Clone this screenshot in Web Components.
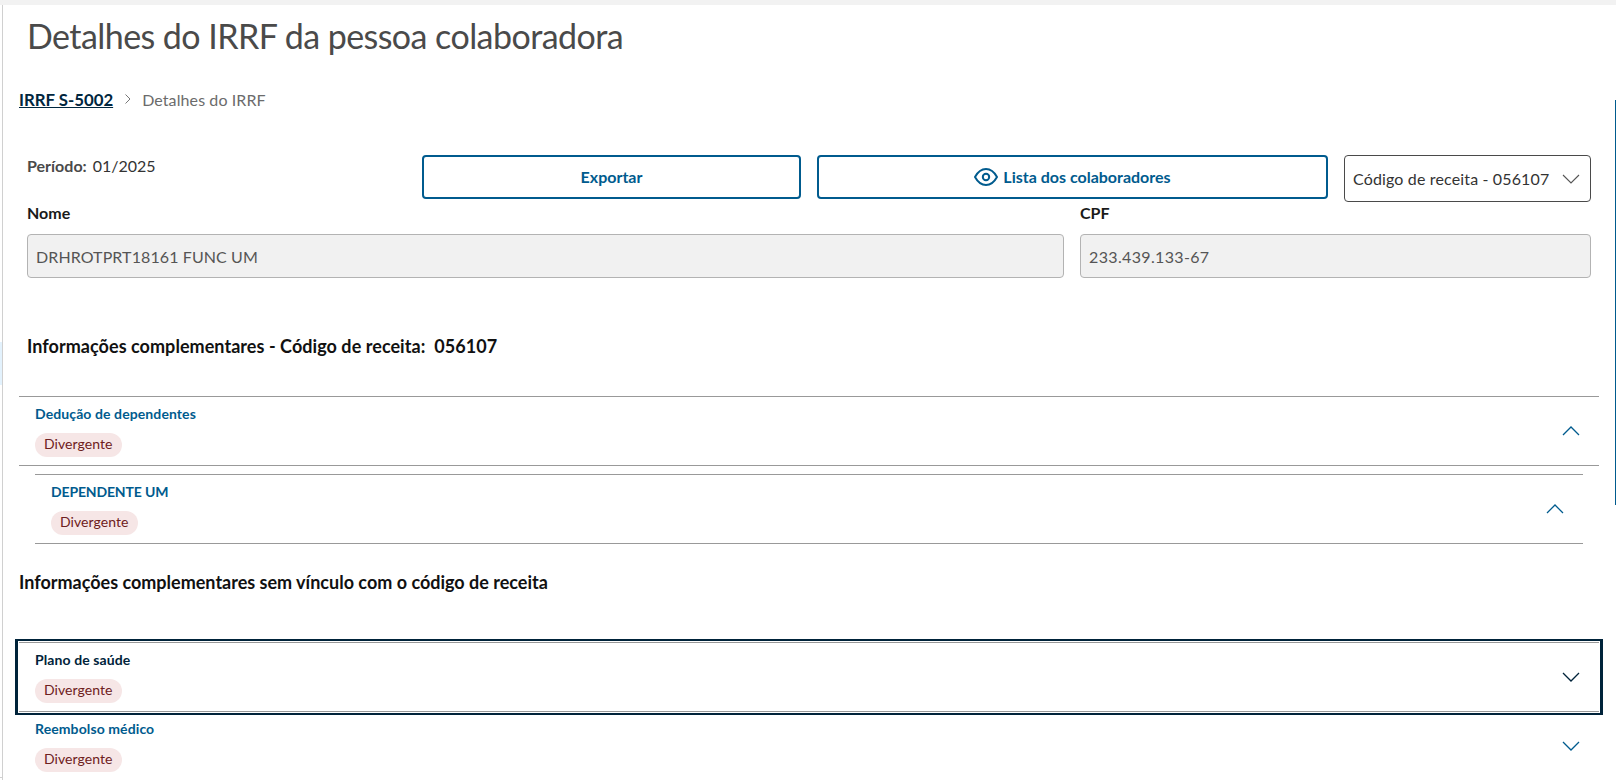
<!DOCTYPE html>
<html lang="pt-BR">
<head>
<meta charset="utf-8">
<title>Detalhes do IRRF</title>
<style>
  html, body { margin: 0; height: 100%; overflow: hidden; background: #fff; }
  body { font-family: Lato, "Open Sans", sans-serif; color: #1f1f1f; }
</style>
</head>
<body>
<irrf-page>
  <page-title slot="title">Detalhes do IRRF da pessoa colaboradora</page-title>
  <bread-crumb slot="crumb" link="IRRF S-5002" current="Detalhes do IRRF"></bread-crumb>

  <div slot="toolbar" style="display:contents">
    <period-info label="Período:" value="01/2025"></period-info>
    <action-button style="width:379px;margin-left:148px">Exportar</action-button>
    <action-button icon="eye" style="width:511px;margin-left:16px">Lista dos colaboradores</action-button>
    <code-select style="width:247px;margin-left:16px">Código de receita - 056107</code-select>
  </div>

  <read-field slot="fields" label="Nome" value="DRHROTPRT18161 FUNC UM" style="width:1037px;letter-spacing:0.1px"></read-field>
  <read-field slot="fields" label="CPF" value="233.439.133-67" style="width:511px;letter-spacing:0.35px"></read-field>

  <div slot="groups">
    <section-heading indent="27" top="56" bottom="38" style="letter-spacing:0.05px">Informações complementares - Código de receita:&nbsp; 056107</section-heading>
    <accordion-row open style="margin:0 17px 0 19px">Dedução de dependentes</accordion-row>
    <accordion-row open style="margin:8px 33px 0 35px;letter-spacing:-0.15px">DEPENDENTE UM</accordion-row>
    <section-heading indent="19" top="26" bottom="48">Informações complementares sem vínculo com o código de receita</section-heading>
    <accordion-row focused style="margin:0 17px 0 19px">Plano de saúde</accordion-row>
    <accordion-row style="margin:-1px 17px 0 19px;border-top-color:transparent">Reembolso médico</accordion-row>
  </div>
</irrf-page>

<script>
const FONT = `Lato, "Open Sans", sans-serif`;
const BLUE = '#005b8e';

class IrrfPage extends HTMLElement {
  constructor() {
    super();
    this.attachShadow({ mode: 'open' }).innerHTML = `
      <style>
        :host { display: block; position: relative; height: 780px; overflow: hidden; background: #fff; border-top: 5px solid #f2f2f2; box-sizing: border-box; }
        .edge { position: absolute; left: 2px; top: 0; bottom: 0; width: 1px; background: #d0d0d0; }
        .tint { position: absolute; left: 0; top: 337px; width: 2px; height: 43px; background: #e3f2fd; }
        .foot { position: absolute; left: 0; bottom: 2px; width: 3px; height: 1px; background: #d0d0d0; }
        .rail { position: absolute; right: 0; top: 95px; width: 1px; height: 405px; background: ${BLUE}; }
        .title { padding: 11px 0 0 27px; }
        .crumb { padding: 32px 0 0 19px; }
        .toolbar { display: flex; align-items: flex-start; padding: 45px 0 0 27px; }
        .fields { display: flex; gap: 16px; padding-left: 27px; }
      </style>
      <div class="edge"></div>
      <div class="tint"></div>
      <div class="foot"></div>
      <div class="rail"></div>
      <div class="title"><slot name="title"></slot></div>
      <div class="crumb"><slot name="crumb"></slot></div>
      <div class="toolbar"><slot name="toolbar"></slot></div>
      <div class="fields"><slot name="fields"></slot></div>
      <slot name="groups"></slot>`;
  }
}

class PageTitle extends HTMLElement {
  constructor() {
    super();
    this.attachShadow({ mode: 'open' }).innerHTML = `
      <style>
        :host { display: block; font: 400 34px/40px ${FONT}; letter-spacing: -0.56px; color: #4a4a4a; }
      </style><slot></slot>`;
  }
}

class BreadCrumb extends HTMLElement {
  connectedCallback() {
    this.attachShadow({ mode: 'open' }).innerHTML = `
      <style>
        :host { display: flex; align-items: center; height: 22px; font-family: ${FONT}; }
        a { font-size: 16.8px; font-weight: 700; color: #00263e; text-decoration: underline; }
        svg { margin: 0 10px 0 11px; }
        span { font-size: 16px; letter-spacing: 0.1px; color: #6b6b6b; }
      </style>
      <a>${this.getAttribute('link')}</a>
      <svg width="8" height="12" viewBox="0 0 8 12" fill="none" stroke="#777" stroke-width="1"><path d="M1.500 1.500 6 6l-4.500 4.500"/></svg>
      <span>${this.getAttribute('current')}</span>`;
  }
}

class PeriodInfo extends HTMLElement {
  connectedCallback() {
    this.attachShadow({ mode: 'open' }).innerHTML = `
      <style>
        :host { display: flex; gap: 6px; width: 247px; height: 24px; font: 400 16px/22px ${FONT}; color: #333; flex: none; }
        b { font-weight: 700; color: #4a4a4a; }
      </style>
      <b>${this.getAttribute('label')}</b><span>${this.getAttribute('value')}</span>`;
  }
}

class ActionButton extends HTMLElement {
  connectedCallback() {
    const eye = this.getAttribute('icon') === 'eye' ? `
      <svg width="24" height="18" viewBox="0 0 24 18" fill="none" stroke="${BLUE}" stroke-width="2"><path d="M1 9C4 3.500 7.500 1 12 1s8 2.500 11 8c-3 5.500-6.500 8-11 8S4 14.500 1 9Z" stroke-linejoin="round"/><circle cx="12" cy="9" r="3.200"/></svg>` : '';
    this.attachShadow({ mode: 'open' }).innerHTML = `
      <style>
        :host { display: flex; flex: none; box-sizing: border-box; height: 44px; align-items: center; justify-content: center; gap: 5px; border: 2px solid ${BLUE}; border-radius: 4px; font: 700 16px/20px ${FONT}; color: ${BLUE}; background: #fff; }
      </style>${eye}<slot></slot>`;
  }
}

class CodeSelect extends HTMLElement {
  constructor() {
    super();
    this.attachShadow({ mode: 'open' }).innerHTML = `
      <style>
        :host { display: flex; flex: none; box-sizing: border-box; height: 47px; align-items: center; justify-content: space-between; padding: 0 10px 0 8px; border: 1px solid #4a4a4a; border-radius: 4px; font: 400 16px/20px ${FONT}; letter-spacing: 0.15px; color: #333; background: #fff; }
      </style>
      <slot></slot>
      <svg width="18" height="10" viewBox="0 0 18 10" fill="none" stroke="#555" stroke-width="1.100"><path d="M1 1l8 8 8-8"/></svg>`;
  }
}

class ReadField extends HTMLElement {
  connectedCallback() {
    this.attachShadow({ mode: 'open' }).innerHTML = `
      <style>
        :host { display: block; flex: none; font-family: ${FONT}; }
        label { display: block; height: 32px; font-size: 16px; line-height: 22px; font-weight: 700; letter-spacing: 0; color: #1a1a1a; }
        .box { box-sizing: border-box; height: 44px; display: flex; align-items: center; padding: 0 8px; background: #f1f1f1; border: 1px solid #b3b3b3; border-radius: 4px; font-size: 16px; color: #555; }
      </style>
      <label>${this.getAttribute('label')}</label>
      <div class="box">${this.getAttribute('value')}</div>`;
  }
}

class SectionHeading extends HTMLElement {
  connectedCallback() {
    this.attachShadow({ mode: 'open' }).innerHTML = `
      <style>
        :host { display: block; font: 700 18px/24px ${FONT}; color: #111;
          padding: ${this.getAttribute('top')}px 0 ${this.getAttribute('bottom')}px ${this.getAttribute('indent')}px; }
      </style><slot></slot>`;
  }
}

class StatusBadge extends HTMLElement {
  constructor() {
    super();
    this.attachShadow({ mode: 'open' }).innerHTML = `
      <style>
        :host { display: inline-flex; box-sizing: border-box; align-items: center; height: 24px; padding: 0 10px 1px 9px; border-radius: 12px; background: #f6e6e6; color: #6e2020; font: 400 14px/22px ${FONT}; letter-spacing: 0.05px; }
      </style><slot></slot>`;
  }
}

class AccordionRow extends HTMLElement {
  constructor() {
    super();
    const up = this.hasAttribute('open');
    const focused = this.hasAttribute('focused');
    const colour = focused ? '#00233a' : BLUE;
    this.attachShadow({ mode: 'open' }).innerHTML = `
      <style>
        :host { display: block; position: relative; box-sizing: border-box; height: 70px; border-top: 1px solid #999; border-bottom: 1px solid #999; font-family: ${FONT}; letter-spacing: 0.1px; }
        :host([focused])::after { content: ''; position: absolute; top: -4px; bottom: -4px; left: -4px; right: -4px; border: solid #00233a; border-width: 2px 3px; z-index: 1; }
        .row { display: flex; align-items: center; justify-content: space-between; height: 100%; padding: 0 19px 0 16px; }
        .title { font-size: 14px; line-height: 16px; font-weight: 700; color: ${colour}; margin-bottom: 11px; }
        svg { transform: ${up ? 'rotate(180deg)' : 'none'}; }
      </style>
      <div class="row">
        <div>
          <div class="title"><slot></slot></div>
          <status-badge>Divergente</status-badge>
        </div>
        <svg width="18" height="10" viewBox="0 0 18 10" fill="none" stroke="${colour}" stroke-width="1.300"><path d="M1 1l8 8 8-8"/></svg>
      </div>`;
  }
}

customElements.define('irrf-page', IrrfPage);
customElements.define('page-title', PageTitle);
customElements.define('bread-crumb', BreadCrumb);
customElements.define('period-info', PeriodInfo);
customElements.define('action-button', ActionButton);
customElements.define('code-select', CodeSelect);
customElements.define('read-field', ReadField);
customElements.define('section-heading', SectionHeading);
customElements.define('status-badge', StatusBadge);
customElements.define('accordion-row', AccordionRow);
</script>
</body>
</html>
